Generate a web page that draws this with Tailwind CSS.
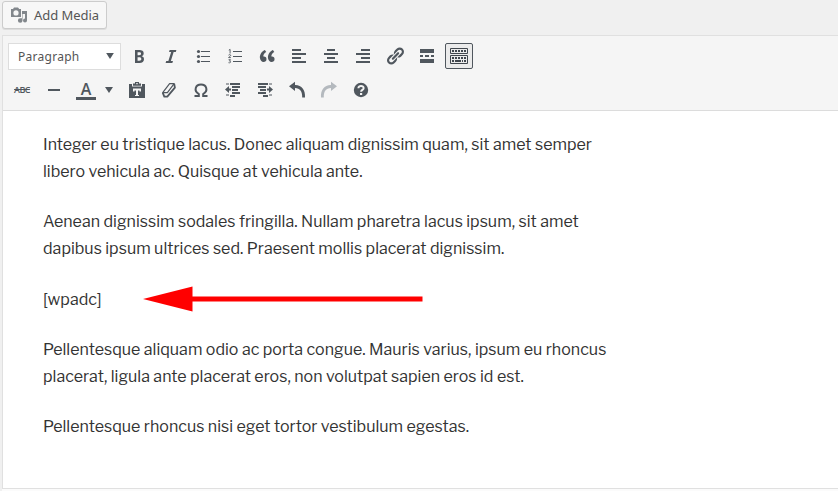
<!DOCTYPE html>
<html lang="en"><head><meta charset="utf-8"><title>Post editor</title>
<script src="https://cdn.jsdelivr.net/npm/@tailwindcss/browser@4"></script></head>
<body class="w-[838px] h-[491px] overflow-hidden bg-[#f0f0f0] flex flex-col font-['Open_Sans','Noto_Sans',sans-serif]">
<header class="h-[35px] shrink-0 pl-[2px] pt-px">
 <button class="flex items-center w-[105px] h-[28px] pl-[7px] gap-[6px] rounded-[3px] border border-[#ccc] bg-[#f7f7f7] shadow-[0_1px_0_#ddd] text-[13px] text-[#555] whitespace-nowrap">
  <svg class="size-[18px] shrink-0" viewBox="0 0 18 18" fill="#82878c"><path fill-rule="evenodd" d="M1 3h2l1-1.600h4L9.200 3H11v8H1zM6 4.300a2.600 2.600 0 1 0 0 5.200 2.600 2.600 0 0 0 0-5.200z"/><path d="M12 5h5v9.500a2 2 0 1 1-2-2V8h-2.500v6.500a2.300 2.300 0 1 1-2.300-2.300H12z"/></svg>
  <span class="pt-[2px] font-['Noto_Sans',sans-serif] tracking-[-0.05px]">Add Media</span></button>
</header>
<main class="ml-[2px] h-[454px] shrink-0 border-l border-t border-b border-[#e0e0e0] bg-white">
 <div class="h-[75px] bg-[#f5f5f5] border-b border-[#dcdcdc] pt-[3px] pl-[3px]">
  <div class="flex h-[34px] items-center text-[#50575e]">
   <button class="ml-[2px] mr-[2px] w-[113px] h-[27px] bg-white border border-[#ddd] flex items-center justify-between pl-[9px] pr-[6px] text-[12px] font-['Noto_Sans',sans-serif] text-[#555]"><span class="pt-px tracking-[0.27px]">Paragraph</span><svg class="w-[8px] h-[6px]" viewBox="0 0 9 7"><path fill="#50575e" d="M0 0h9L4.500 7z"/></svg></button>
   <button class="w-8 flex justify-center"><svg class="size-5" viewBox="0 0 20 20" fill="currentColor"><path d="M6 4v13h4.540c1.370 0 2.460-.33 3.260-1 .8-.66 1.200-1.580 1.200-2.770 0-.84-.17-1.510-.51-2.010s-.9-.85-1.670-1.030v-.09c.57-.1 1.020-.4 1.360-.9s.51-1.130.51-1.910c0-1.140-.39-1.980-1.170-2.500C12.750 4.260 11.500 4 9.780 4H6zm2.570 5.150V6.260h1.360c.73 0 1.270.11 1.610.32.34.22.51.58.51 1.070 0 .54-.16.92-.47 1.150s-.82.35-1.510.35h-1.500zm0 2.190h1.600c1.440 0 2.160.53 2.160 1.610 0 .6-.17 1.050-.51 1.340s-.86.43-1.570.43H8.570v-3.380z"/></svg></button>
   <button class="w-8 flex justify-center"><svg class="size-5" viewBox="0 0 20 20" fill="currentColor"><path d="M14.780 6h-2.130l-2.800 9h2.120l-.62 2H4.600l.62-2h2.140l2.800-9H8.030l.62-2h6.750z"/></svg></button>
   <button class="w-8 flex justify-center"><svg class="size-5" viewBox="0 0 20 20" fill="currentColor"><circle cx="5.500" cy="5.500" r="1.600"/><circle cx="5.500" cy="10.500" r="1.600"/><circle cx="5.500" cy="15.500" r="1.600"/><path d="M8 5h9v1H8zM8 10h9v1H8zM8 15h9v1H8z"/></svg></button>
   <button class="w-8 flex justify-center"><svg class="size-5" viewBox="0 0 20 20" fill="currentColor"><path d="M8 5h9v1H8zM8 10h9v1H8zM8 15h9v1H8z"/><path fill="none" stroke="currentColor" stroke-width=".9" d="M3.800 4.200l1.300-.8V7.500M3.500 9.200c.3-.8 2.200-.8 2.200.2 0 .9-2.100 1.500-2.100 2.200h2.300M3.600 13.700h1.900l-1 1.400c2 .1 1.400 2.200-1 1.600"/></svg></button>
   <button class="w-8 flex justify-center"><svg class="size-5" viewBox="0 0 20 20" fill="currentColor"><path d="M9.490 13.220c0-.74-.2-1.380-.61-1.900-.62-.78-1.830-.88-2.530-.72-.29-1.650 1.110-3.750 2.920-4.650L7.880 4c-2.730 1.300-5.420 4.280-4.960 8.050C3.210 14.430 4.590 16 6.540 16c.85 0 1.560-.25 2.120-.75s.83-1.180.83-2.030zm8.050 0c0-.74-.2-1.380-.61-1.900-.63-.78-1.830-.88-2.530-.72-.29-1.650 1.110-3.750 2.920-4.650L15.930 4c-2.730 1.300-5.410 4.280-4.950 8.050.29 2.380 1.660 3.950 3.610 3.950.85 0 1.560-.25 2.120-.75s.83-1.180.83-2.030z"/></svg></button>
   <button class="w-8 flex justify-center"><svg class="size-5" viewBox="0 0 20 20" fill="currentColor"><path d="M12 5V3H3v2h9zm5 4V7H3v2h14zm-5 4v-2H3v2h9zm5 4v-2H3v2h14z"/></svg></button>
   <button class="w-8 flex justify-center"><svg class="size-5" viewBox="0 0 20 20" fill="currentColor"><path d="M14 5V3H6v2h8zm3 4V7H3v2h14zm-3 4v-2H6v2h8zm3 4v-2H3v2h14z"/></svg></button>
   <button class="w-8 flex justify-center"><svg class="size-5" viewBox="0 0 20 20" fill="currentColor"><path d="M17 5V3H8v2h9zm0 4V7H3v2h14zm0 4v-2H8v2h9zm0 4v-2H3v2h14z"/></svg></button>
   <button class="w-8 flex justify-center"><svg class="size-5" viewBox="0 0 20 20" fill="currentColor"><path d="M17.740 2.760c1.680 1.690 1.680 4.410 0 6.100l-1.530 1.520c-1.120 1.120-2.700 1.470-4.140 1.090l2.620-2.610.76-.77.76-.76c.84-.84.84-2.200 0-3.040-.84-.85-2.200-.85-3.040 0l-.77.76-3.380 3.380c-.37-1.440-.02-3.020 1.100-4.140l1.520-1.530c1.690-1.680 4.420-1.680 6.100 0zM8.590 13.430l5.340-5.340c.42-.42.42-1.100 0-1.520-.44-.43-1.130-.39-1.530 0l-5.330 5.340c-.42.42-.42 1.100 0 1.520.44.43 1.130.39 1.520 0zm-.76 2.290l4.140-4.150c.38 1.440.03 3.020-1.090 4.140l-1.520 1.530c-1.690 1.680-4.410 1.680-6.100 0-1.680-1.680-1.680-4.420 0-6.100l1.530-1.520c1.120-1.120 2.700-1.470 4.140-1.100l-4.140 4.150c-.85.84-.85 2.200 0 3.050.84.84 2.200.84 3.040 0z"/></svg></button>
   <button class="w-8 flex justify-center"><svg class="size-5" viewBox="0 0 20 20" fill="currentColor"><path d="M17 7V3H3v4h14zM6 11V9H3v2h3zm6 0V9H8v2h4zm5 0V9h-3v2h3zm0 6v-4H3v4h14z"/></svg></button>
   <button class="ml-[2px] w-[28px] h-[26px] flex items-center justify-center border border-[#50575e] rounded-[2px] bg-[#ebebeb]"><svg class="size-5" viewBox="0 0 20 20"><path fill="none" stroke="#40464d" d="M1.500 2.500h17v5h-17zM1.500 9.500h17v8h-17z"/><path fill="#40464d" d="M3 4h2v2H3zM6 4h2v2H6zM9 4h2v2H9zM12 4h2v2h-2zM15 4h2v2h-2zM3 11h2v2H3zM6 11h2v2H6zM9 11h2v2H9zM12 11h2v2h-2zM15 11h2v2h-2zM3 14h2v2H3zM6 14h6v2H6zM13 14h1v2h-1zM15 14h2v2h-2z"/></svg></button>
  </div>
  <div class="flex h-[34px] items-center text-[#50575e]">
   <button class="w-8 text-center text-[9px] font-semibold line-through tracking-[-0.6px]">ABC</button>
   <button class="w-8 flex justify-center"><svg class="size-5" viewBox="0 0 20 20"><path fill="currentColor" d="M4 9h12v2H4z"/></svg></button>
   <button class="w-[51px] flex items-center pl-[6px] gap-[9px]"><span class="w-5 h-5 flex items-center justify-center border-b-[3px] border-[#50575e] text-[16px] font-semibold leading-none">A</span><svg class="w-2 h-[6px]" viewBox="0 0 8 6"><path fill="currentColor" d="M0 0h8L4 6z"/></svg></button>
   <button class="w-8 flex justify-center"><svg class="size-5" viewBox="0 0 20 20" fill="currentColor"><path fill-rule="evenodd" d="M2 4h3v2.500h10V4h3v14H2zM6 8.500v3h1.500v-1H9V15H8v1h4v-1h-1v-4.500h1.500v1H14v-3z"/><path fill-rule="evenodd" d="M6 3.500h2V2h4v1.500h2v2.200H6zM9.300 3v1.200h1.400V3z"/></svg></button>
   <button class="w-8 flex justify-center"><svg class="size-5" viewBox="0 0 20 20" fill="none" stroke="currentColor" stroke-linejoin="round"><path stroke-width="1.200" d="M10.600 3.600h4.600L8.400 12.600H3.700z"/><path stroke-width="1.800" d="M3.700 12.600l1.600 4h3l7.600-9-.7-3.700"/></svg></button>
   <button class="w-8 flex justify-center"><svg class="size-5" viewBox="0 0 20 20"><path fill="none" stroke="currentColor" stroke-width="2" d="M3.500 16h4.300v-2C2.300 10.500 4.500 4.500 10 4.500s7.700 6 2.200 9.500v2h4.300"/></svg></button>
   <button class="w-8 flex justify-center"><svg class="size-5" viewBox="0 0 20 20" fill="currentColor"><path d="M7 3h10v2H7zM9 6h8v2H9zM9 9h6v2H9zM9 12h8v2H9zM7 15h5v2H7zM2 9.500L6 6v2.500h2v2H6V13zM3 3.500h3v1H3zM3 14.500h3v1H3z"/></svg></button>
   <button class="w-8 flex justify-center"><svg class="size-5" viewBox="0 0 20 20" fill="currentColor"><path d="M3 3h10v2H3zM3 6h8v2H3zM5 9h6v2H5zM3 12h8v2H3zM8 15h5v2H8zM18 9.500L14 6v2.500h-2v2h2V13zM14 3.500h3v1h-3zM14 14.500h3v1h-3z"/></svg></button>
   <button class="w-8 flex justify-center"><svg class="size-5" viewBox="0 0 20 20" fill="currentColor"><path d="M2 6.200l6-4.400v3.200c6.500-.2 10.500 4.800 10 12.500h-2.800c.2-6-2.200-9.400-7.200-9.400v3z"/></svg></button>
   <button class="w-8 flex justify-center"><svg class="size-5" viewBox="0 0 20 20" fill="#b4b9be"><path d="M18 6.200l-6-4.400v3.200C5.500 4.800 1.500 9.800 2 17.500h2.800c-.2-6 2.200-9.400 7.200-9.400v3z"/></svg></button>
   <button class="w-8 flex justify-center"><svg class="size-5" viewBox="0 0 20 20"><circle cx="10" cy="10" r="7.200" fill="currentColor"/><path fill="none" stroke="#f5f5f5" stroke-width="2" d="M7.400 8.300c0-3.200 5.300-3 5.200-.1 0 1.700-2.500 1.700-2.500 3.600"/><path fill="#f5f5f5" d="M9 13h2.200v2H9z"/></svg></button>
  </div>
 </div>
 <article class="pl-[40px] pt-[20px] flex flex-col gap-[23.3px] text-[16px] leading-[27px] tracking-[0.012px] text-[#333] font-['Libre_Franklin','Inter',sans-serif] whitespace-nowrap">
  <p>Integer eu tristique lacus. Donec aliquam dignissim quam, sit amet semper<br>libero vehicula ac. Quisque at vehicula ante.</p>
  <p>Aenean dignissim sodales fringilla. Nullam pharetra lacus ipsum, sit amet<br>dapibus ipsum ultrices sed. Praesent mollis placerat dignissim.</p>
  <div class="flex items-center"><p class="w-[100px]">[wpadc]</p><svg class="w-[280px] h-[26px]" viewBox="0 0 280 26"><path fill="#f00" d="M0 13L49.500 .5v10H279.500v5H49.500v10z"/></svg></div>
  <p>Pellentesque aliquam odio ac porta congue. Mauris varius, ipsum eu rhoncus<br>placerat, ligula ante placerat eros, non volutpat sapien eros id est.</p>
  <p>Pellentesque rhoncus nisi eget tortor vestibulum egestas.</p>
 </article>
</main>
<footer class="h-[2px] shrink-0 ml-[2px] bg-[#fbfbfb]"></footer>
</body></html>
